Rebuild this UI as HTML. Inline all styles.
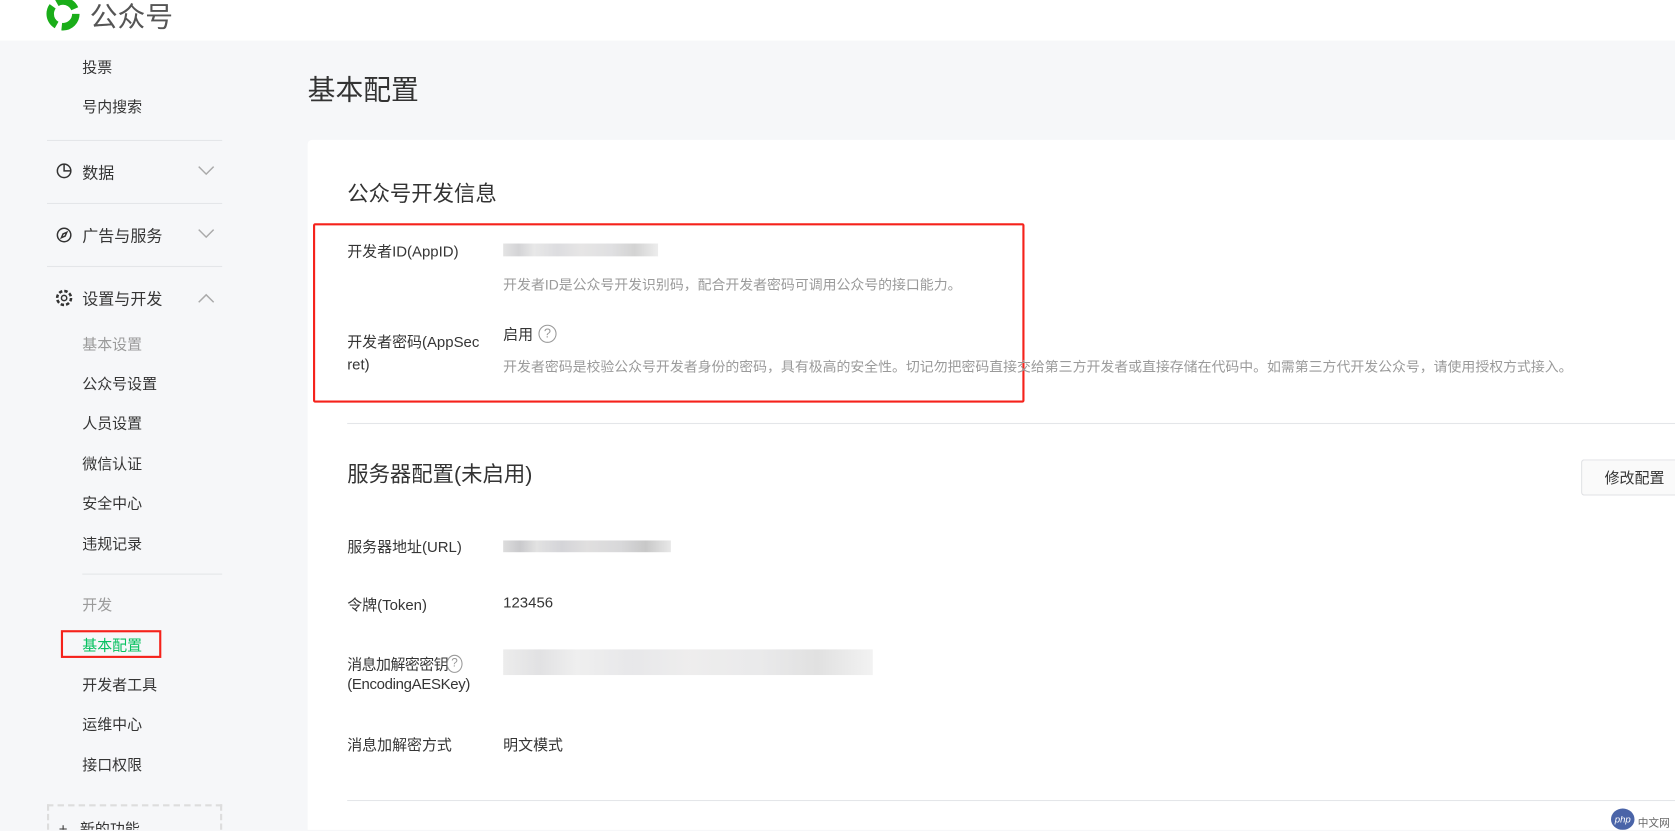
<!DOCTYPE html>
<html><head><meta charset="utf-8"><style>
*{margin:0;padding:0;box-sizing:border-box}
html,body{width:1675px;height:831px;overflow:hidden;background:#f6f7f9}
body{font-family:"Liberation Sans","Noto Sans CJK SC",sans-serif;color:#353535}
#w{position:absolute;left:0;top:0;width:1568px;height:777px;transform:scale(1.0683,1.0681);transform-origin:0 0;background:#f6f7f9;overflow:hidden}
.a{position:absolute;white-space:nowrap}
.s{font-size:14px;color:#353535}
.g{color:#9a9a9a}
.hr{position:absolute;height:1px;background:#e4e6e9}
.blur{position:absolute;height:11px;background:linear-gradient(90deg,#ddd,#c9c9cc 10%,#e2e2e2 20%,#d4d4d8 35%,#e0dfdf 50%,#d8d8da 70%,#c8c8c8 85%,#e8e8e8)}
</style></head><body><div id="w">
<div class="a" style="left:0;top:0;width:1568px;height:38px;background:#fff"></div>
<svg class="a" style="left:42px;top:-4px" width="34" height="34" viewBox="0 0 34 34"><circle cx="17" cy="17" r="12" fill="none" stroke="#1aad19" stroke-width="7" stroke-dasharray="20 5"/></svg>
<div class="a" style="left:84px;top:-4px;font-size:26px;color:#555">公众号</div>

<div class="a s" style="left:77px;top:53px">投票</div>
<div class="a s" style="left:77px;top:90px">号内搜索</div>
<div class="hr" style="left:44px;top:131px;width:164px"></div>
<svg class="a" style="left:52px;top:152px" width="16" height="16" viewBox="0 0 16 16" fill="none" stroke="#333" stroke-width="1.4"><circle cx="8" cy="8" r="6.3"/><path d="M8 2v6h6"/></svg>
<div class="a" style="left:77px;top:151px;font-size:15px">数据</div>
<svg class="a" style="left:185px;top:155px" width="16" height="10" viewBox="0 0 16 10" fill="none" stroke="#aaa" stroke-width="1.4"><path d="M1 1l7 7 7-7"/></svg>
<div class="hr" style="left:44px;top:190px;width:164px"></div>
<svg class="a" style="left:52px;top:212px" width="16" height="16" viewBox="0 0 16 16" fill="none" stroke="#333" stroke-width="1.4"><circle cx="8" cy="8" r="6.3"/><path d="M10.5 5.5L7 7l-1.5 3.5L9 9z"/></svg>
<div class="a" style="left:77px;top:210px;font-size:15px">广告与服务</div>
<svg class="a" style="left:185px;top:214px" width="16" height="10" viewBox="0 0 16 10" fill="none" stroke="#aaa" stroke-width="1.4"><path d="M1 1l7 7 7-7"/></svg>
<div class="hr" style="left:44px;top:249px;width:164px"></div>
<svg class="a" style="left:51px;top:270px" width="18" height="18" viewBox="0 0 18 18" fill="none" stroke="#333" stroke-width="1.4"><circle cx="9" cy="9" r="2.5"/><circle cx="9" cy="9" r="6.5" stroke-dasharray="3.2 1.9" stroke-width="2.4"/></svg>
<div class="a" style="left:77px;top:269px;font-size:15px">设置与开发</div>
<svg class="a" style="left:185px;top:274px" width="16" height="10" viewBox="0 0 16 10" fill="none" stroke="#aaa" stroke-width="1.4"><path d="M1 9l7-7 7 7"/></svg>
<div class="a s g" style="left:77px;top:312px">基本设置</div>
<div class="a s" style="left:77px;top:349px">公众号设置</div>
<div class="a s" style="left:77px;top:386px">人员设置</div>
<div class="a s" style="left:77px;top:424px">微信认证</div>
<div class="a s" style="left:77px;top:461px">安全中心</div>
<div class="a s" style="left:77px;top:499px">违规记录</div>
<div class="hr" style="left:77px;top:537px;width:131px"></div>
<div class="a s g" style="left:77px;top:556px">开发</div>
<div class="a" style="left:57px;top:590px;width:94px;height:26px;border:2px solid #f5221b"></div>
<div class="a s" style="left:77px;top:594px;color:#07c160">基本配置</div>
<div class="a s" style="left:77px;top:631px">开发者工具</div>
<div class="a s" style="left:77px;top:668px">运维中心</div>
<div class="a s" style="left:77px;top:706px">接口权限</div>
<div class="a" style="left:44px;top:753px;width:164px;height:24px;border:2px dashed #ddd;border-bottom:none"></div>
<div class="a s" style="left:55px;top:766px;height:11px;overflow:hidden">+&nbsp;&nbsp; 新的功能</div>

<div class="a" style="left:288px;top:64px;font-size:26px;color:#333">基本配置</div>
<div class="a" style="left:288px;top:131px;width:1280px;height:646px;background:#fff;border-radius:4px 0 0 0"></div>
<div class="a" style="left:325px;top:165px;font-size:20px;color:#333">公众号开发信息</div>
<div class="a" style="left:293px;top:209px;width:666px;height:168px;border:2px solid #f5221b;border-radius:2px"></div>
<div class="a s" style="left:325px;top:225px">开发者ID(AppID)</div>
<div class="blur" style="left:471px;top:228px;width:145px;height:12px;opacity:.8"></div>
<div class="a s g" style="left:471px;top:256px;font-size:13px">开发者ID是公众号开发识别码，配合开发者密码可调用公众号的接口能力。</div>
<div class="a s" style="left:325px;top:310px;line-height:21px">开发者密码(AppSec<br>ret)</div>
<div class="a s" style="left:471px;top:303px">启用</div>
<div class="a" style="left:504px;top:304px;width:17px;height:17px;border:1px solid #999;border-radius:50%;font-size:12px;color:#999;text-align:center;line-height:15px">?</div>
<div class="a s g" style="left:471px;top:333px;font-size:13px">开发者密码是校验公众号开发者身份的密码，具有极高的安全性。切记勿把密码直接交给第三方开发者或直接存储在代码中。如需第三方代开发公众号，请使用授权方式接入。</div>
<div class="hr" style="left:325px;top:396px;width:1243px"></div>
<div class="a" style="left:325px;top:428px;font-size:20px;color:#333">服务器配置(未启用)</div>
<div class="a" style="left:1480px;top:430px;width:88px;height:34px;border:1px solid #e0e1e4;border-right:none;border-radius:3px 0 0 3px;background:#fafafa;font-size:14px;line-height:32px;padding-left:21px;overflow:hidden">修改配置</div>
<div class="a s" style="left:325px;top:502px">服务器地址(URL)</div>
<div class="blur" style="left:471px;top:506px;width:157px;height:11px"></div>
<div class="a s" style="left:325px;top:556px">令牌(Token)</div>
<div class="a s" style="left:471px;top:556px">123456</div>
<div class="a s" style="left:325px;top:612px;letter-spacing:-0.5px">消息加解密密钥</div>
<div class="a" style="left:418px;top:613px;width:15px;height:17px;border:1px solid #999;border-radius:50%;font-size:11px;color:#999;text-align:center;line-height:15px;background:#fff">?</div>
<div class="a s" style="left:325px;top:632px;letter-spacing:-0.3px">(EncodingAESKey)</div>
<div class="blur" style="left:471px;top:608px;width:346px;height:24px;opacity:.55"></div>
<div class="a s" style="left:325px;top:687px">消息加解密方式</div>
<div class="a s" style="left:471px;top:687px">明文模式</div>
<div class="hr" style="left:325px;top:749px;width:1243px"></div>
<div class="a" style="left:1508px;top:757px;width:22px;height:20px;border-radius:50%;background:#4a64a8;color:#fff;font-size:9px;text-align:center;line-height:20px;font-style:italic">php</div>
<div class="a" style="left:1533px;top:762px;font-size:10px;color:#666">中文网</div>
</div></body></html>
